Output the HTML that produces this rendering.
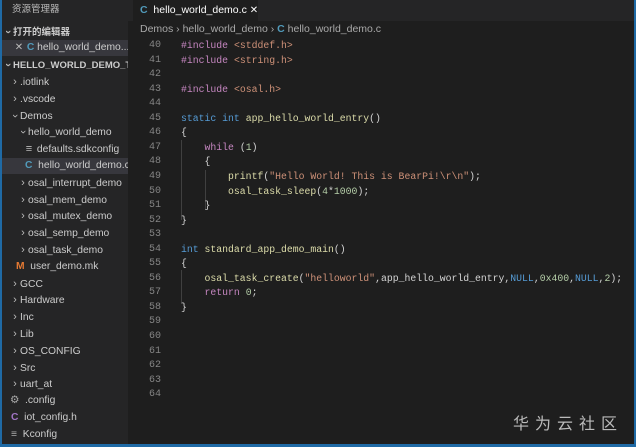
<!DOCTYPE html><html><head><meta charset="utf-8"><style>
*{margin:0;padding:0;box-sizing:border-box}
body{width:636px;height:447px;background:#1f6aa5;position:relative;overflow:hidden;font-family:"Liberation Sans","Noto Sans CJK SC",sans-serif}
#side{position:absolute;left:2px;top:0;width:126px;height:444px;background:#252526;color:#ccc;font-size:10.3px}
#ed{position:absolute;left:128px;top:0;width:506px;height:444px;background:#1e1e1e}
.r{position:absolute;left:0;width:126px;height:16px;line-height:16px;white-space:nowrap;overflow:hidden}
.ch{color:#bbb;font-size:11px;display:inline-block;width:10px;text-align:center}
.dn{display:inline-block;transform:rotate(90deg)}
.c{color:#519aba;font-weight:bold}
#tabs{position:absolute;left:0;top:0;width:506px;height:21px;background:#252526}
#tab{position:absolute;left:5px;top:0;width:125px;height:21px;background:#1e1e1e;color:#fff;font-size:10.5px;line-height:20px;padding-left:7px;white-space:nowrap;overflow:hidden}
#bc{position:absolute;left:12px;top:21px;height:16px;line-height:16px;font-size:10.5px;color:#a9a9a9;white-space:nowrap}
.ln{position:absolute;left:0;width:33px;text-align:right;color:#858585;font-family:"Liberation Mono",monospace;font-size:10px}
.cd{position:absolute;left:53px;color:#d4d4d4;font-family:"Liberation Mono",monospace;font-size:9.8px;white-space:pre}
.p{color:#c586c0}.s{color:#ce9178}.k{color:#569cd6}.f{color:#dcdcaa}.n{color:#b5cea8}
.g{position:absolute;width:1px;background:#404040}
</style></head><body>
<div id="side">
<div class="r" style="top:2px;color:#bbb;font-size:9.5px;padding-left:10px">资源管理器</div>
<div class="r" style="top:24px;font-weight:bold;font-size:9.5px;padding-left:1px"><span class="ch"><span class="dn">›</span></span>打开的编辑器</div>
<div class="r" style="top:40px;background:#37373d;padding-left:12px"><span class="ch" style="font-size:10px">✕</span> <span class="c">C</span> hello_world_demo...</div>
<div class="r" style="top:57px;font-weight:bold;font-size:9.5px;padding-left:1px"><span class="ch"><span class="dn">›</span></span>HELLO_WORLD_DEMO_TEST</div>
<div class="r" style="top:74px;padding-left:8px"><span class="ch">›</span>.iotlink</div>
<div class="r" style="top:91px;padding-left:8px"><span class="ch">›</span>.vscode</div>
<div class="r" style="top:108px;padding-left:8px"><span class="ch"><span class="dn">›</span></span>Demos</div>
<div class="r" style="top:124px;padding-left:16px"><span class="ch"><span class="dn">›</span></span>hello_world_demo</div>
<div class="r" style="top:141px;padding-left:22px"><span class="ch">≡</span> defaults.sdkconfig</div>
<div class="r" style="top:158px;padding-left:23px;background:#37373d"><span class="c">C</span>&nbsp; hello_world_demo.c</div>
<div class="r" style="top:175px;padding-left:16px"><span class="ch">›</span>osal_interrupt_demo</div>
<div class="r" style="top:192px;padding-left:16px"><span class="ch">›</span>osal_mem_demo</div>
<div class="r" style="top:208px;padding-left:16px"><span class="ch">›</span>osal_mutex_demo</div>
<div class="r" style="top:225px;padding-left:16px"><span class="ch">›</span>osal_semp_demo</div>
<div class="r" style="top:242px;padding-left:16px"><span class="ch">›</span>osal_task_demo</div>
<div class="r" style="top:259px;padding-left:14px"><span style="color:#e37933;font-weight:bold">M</span>&nbsp; user_demo.mk</div>
<div class="r" style="top:276px;padding-left:8px"><span class="ch">›</span>GCC</div>
<div class="r" style="top:292px;padding-left:8px"><span class="ch">›</span>Hardware</div>
<div class="r" style="top:309px;padding-left:8px"><span class="ch">›</span>Inc</div>
<div class="r" style="top:326px;padding-left:8px"><span class="ch">›</span>Lib</div>
<div class="r" style="top:343px;padding-left:8px"><span class="ch">›</span>OS_CONFIG</div>
<div class="r" style="top:360px;padding-left:8px"><span class="ch">›</span>Src</div>
<div class="r" style="top:376px;padding-left:8px"><span class="ch">›</span>uart_at</div>
<div class="r" style="top:393px;padding-left:8px"><span style="color:#aaa">⚙</span>&nbsp; .config</div>
<div class="r" style="top:410px;padding-left:9px"><span style="color:#a074c4;font-weight:bold">C</span>&nbsp; iot_config.h</div>
<div class="r" style="top:427px;padding-left:9px"><span style="color:#aaa">≡</span>&nbsp; Kconfig</div>
</div>
<div id="ed">
<div id="tabs"><div id="tab"><span class="c">C</span>&nbsp; hello_world_demo.c&nbsp;<span style="font-size:10px">✕</span></div></div>
<div id="bc">Demos › hello_world_demo › <span class="c">C</span> hello_world_demo.c</div>
<div class="g" style="left:53px;top:140px;height:80px"></div>
<div class="g" style="left:77px;top:170px;height:40px"></div>
<div class="g" style="left:53px;top:270px;height:34px"></div>
<div style="position:absolute;top:40px;left:0">
<div class="ln" style="top:0">40</div><div class="cd" style="top:0"><span class="p">#include</span> <span class="s">&lt;stddef.h&gt;</span></div>
<div class="ln" style="top:14.55px">41</div><div class="cd" style="top:14.55px"><span class="p">#include</span> <span class="s">&lt;string.h&gt;</span></div>
<div class="ln" style="top:29.1px">42</div>
<div class="ln" style="top:43.65px">43</div><div class="cd" style="top:43.65px"><span class="p">#include</span> <span class="s">&lt;osal.h&gt;</span></div>
<div class="ln" style="top:58.2px">44</div>
<div class="ln" style="top:72.75px">45</div><div class="cd" style="top:72.75px"><span class="k">static</span> <span class="k">int</span> <span class="f">app_hello_world_entry</span>()</div>
<div class="ln" style="top:87.3px">46</div><div class="cd" style="top:87.3px">{</div>
<div class="ln" style="top:101.85px">47</div><div class="cd" style="top:101.85px">    <span class="p">while</span> (<span class="n">1</span>)</div>
<div class="ln" style="top:116.4px">48</div><div class="cd" style="top:116.4px">    {</div>
<div class="ln" style="top:130.95px">49</div><div class="cd" style="top:130.95px">        <span class="f">printf</span>(<span class="s">"Hello World! This is BearPi!\r\n"</span>);</div>
<div class="ln" style="top:145.5px">50</div><div class="cd" style="top:145.5px">        <span class="f">osal_task_sleep</span>(<span class="n">4</span>*<span class="n">1000</span>);</div>
<div class="ln" style="top:160.05px">51</div><div class="cd" style="top:160.05px">    }</div>
<div class="ln" style="top:174.6px">52</div><div class="cd" style="top:174.6px">}</div>
<div class="ln" style="top:189.15px">53</div>
<div class="ln" style="top:203.7px">54</div><div class="cd" style="top:203.7px"><span class="k">int</span> <span class="f">standard_app_demo_main</span>()</div>
<div class="ln" style="top:218.25px">55</div><div class="cd" style="top:218.25px">{</div>
<div class="ln" style="top:232.8px">56</div><div class="cd" style="top:232.8px">    <span class="f">osal_task_create</span>(<span class="s">"helloworld"</span>,app_hello_world_entry,<span class="k">NULL</span>,<span class="n">0x400</span>,<span class="k">NULL</span>,<span class="n">2</span>);</div>
<div class="ln" style="top:247.35px">57</div><div class="cd" style="top:247.35px">    <span class="p">return</span> <span class="n">0</span>;</div>
<div class="ln" style="top:261.9px">58</div><div class="cd" style="top:261.9px">}</div>
<div class="ln" style="top:276.45px">59</div>
<div class="ln" style="top:291px">60</div>
<div class="ln" style="top:305.55px">61</div>
<div class="ln" style="top:320.1px">62</div>
<div class="ln" style="top:334.65px">63</div>
<div class="ln" style="top:349.2px">64</div>
</div>
<div style="position:absolute;left:385px;top:410px;color:#bbb;font-size:16px;letter-spacing:6px;font-family:'Noto Sans CJK SC',sans-serif">华为云社区</div>
</div>
</body></html>
